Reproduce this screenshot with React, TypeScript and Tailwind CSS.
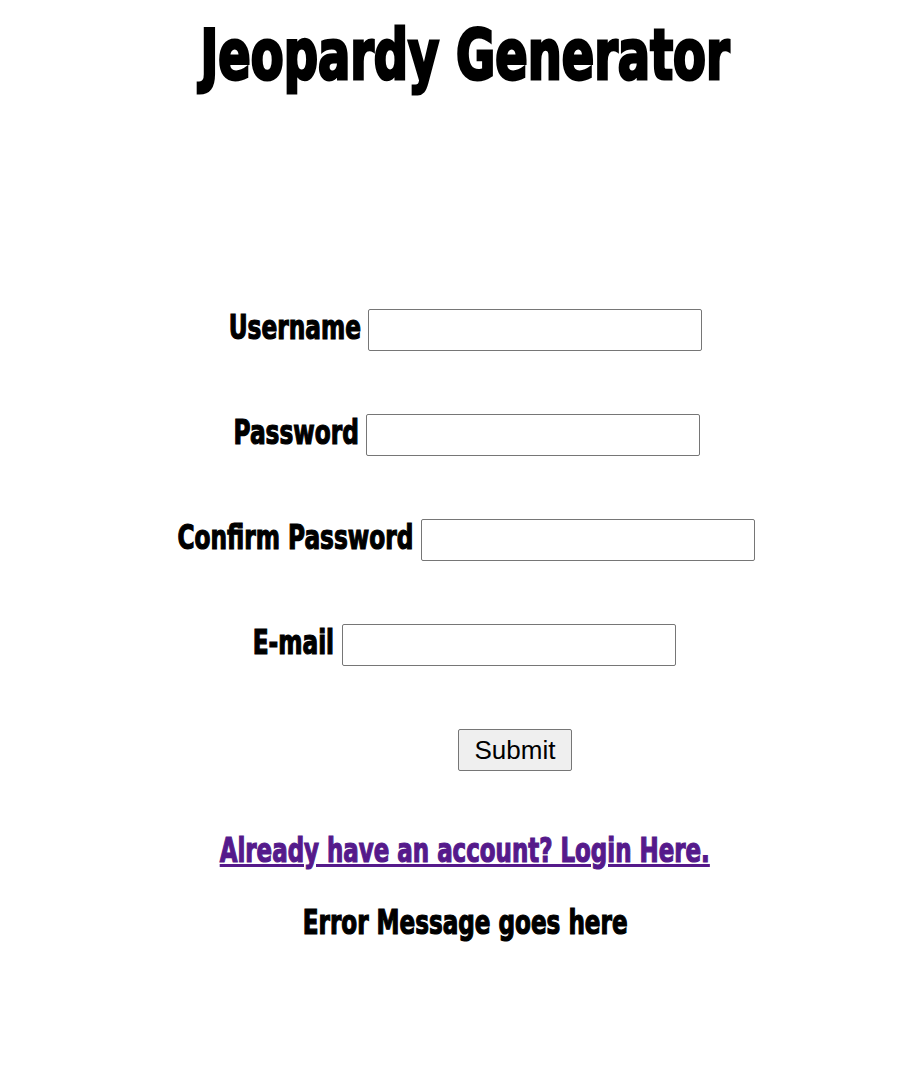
import React from "react";

function Row({ label, w }: { label: string; w: string }) {
  return (
    <div className="flex items-center justify-center gap-[7px] h-[42px]">
      <div className={`flex justify-end whitespace-nowrap ${w}`}>
        <span className="inline-block origin-right scale-x-[0.76] text-[34px] font-bold leading-none text-black -translate-y-[3px] [-webkit-text-stroke:1.2px_currentColor]">
          {label}
        </span>
      </div>
      <input type="text" className="w-[334px] h-[42px] border border-[#767676] rounded-[2px] bg-white" />
    </div>
  );
}

export default function App() {
  return (
    <div className="w-[915px] h-[1090px] bg-white pl-[15px] flex flex-col items-center font-[family-name:'DejaVu_Sans_Condensed','DejaVu_Sans',sans-serif] font-stretch-condensed">
      <h1 className="mt-[20px] whitespace-nowrap">
        <span className="inline-block scale-x-[0.76] text-[70px] font-bold leading-none text-black [-webkit-text-stroke:3px_currentColor]">
          Jeopardy Generator
        </span>
      </h1>
      <div className="mt-[219px] flex flex-col gap-[63px] w-full">
        <Row label="Username" w="w-[133px]" />
        <Row label="Password" w="w-[128px]" />
        <Row label="Confirm Password" w="w-[238px]" />
        <Row label="E-mail" w="w-[80px]" />
        <div className="flex justify-center h-[42px]">
          <button className="ml-[100px] w-[114px] h-[42px] border border-[#767676] rounded-[2px] bg-[#efefef] text-[26px] text-black font-[family-name:'Liberation_Sans',Arial,sans-serif] font-stretch-normal">
            Submit
          </button>
        </div>
      </div>
      <a href="#" className="mt-[62px] whitespace-nowrap">
        <span className="inline-block scale-x-[0.75] text-[34px] font-bold leading-none text-[#551a8b] underline [-webkit-text-stroke:1.2px_currentColor]">
          Already have an account? Login Here.
        </span>
      </a>
      <p className="mt-[36px] whitespace-nowrap">
        <span className="inline-block scale-x-[0.755] text-[34px] font-bold leading-none text-black [-webkit-text-stroke:1.2px_currentColor]">
          Error Message goes here
        </span>
      </p>
    </div>
  );
}
